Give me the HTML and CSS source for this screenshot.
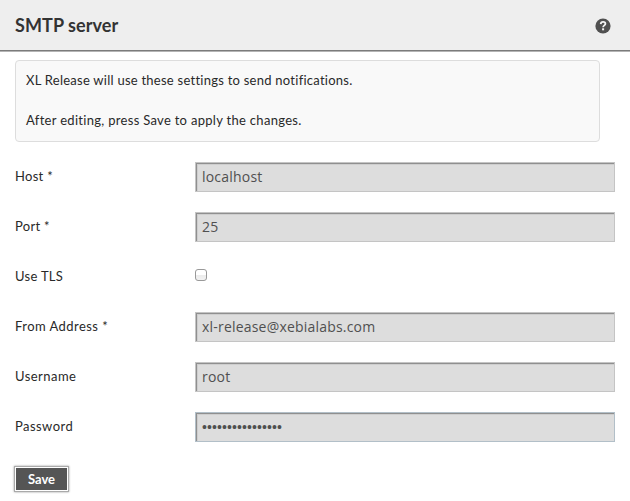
FILE: index.html
```html
<!DOCTYPE html>
<html lang="en">
<head>
<meta charset="utf-8">
<title>SMTP server</title>
<link rel="stylesheet" href="styles.css">
</head>
<body>
<header class="header">
  <h1 class="title">SMTP server</h1>
  <svg class="help" viewBox="0 0 16 16" role="img" aria-label="Help">
    <circle cx="8" cy="8" r="7.6" fill="#505050"/>
    <path d="M5.7 6.1C5.8 4.7 6.7 3.9 8.1 3.9C9.5 3.9 10.4 4.7 10.4 5.8C10.4 7.4 8.2 7.4 8.1 9.2" fill="none" stroke="#f4f4f4" stroke-width="1.8"/>
    <rect x="7.1" y="10.3" width="2" height="2" fill="#f4f4f4"/>
  </svg>
</header>
<main class="content">
  <div class="info">
    <p class="info-line info-intro">XL Release will use these settings to send notifications.</p>
    <p class="info-line">After editing, press Save to apply the changes.</p>
  </div>
  <form class="form">
    <div class="row"><label class="label" for="host">Host *</label><input class="field" id="host" type="text" value="localhost"></div>
    <div class="row"><label class="label" for="port">Port *</label><input class="field" id="port" type="text" value="25"></div>
    <div class="row"><label class="label" for="tls">Use TLS</label><input class="check" id="tls" type="checkbox"></div>
    <div class="row"><label class="label label-wide" for="from">From Address *</label><input class="field" id="from" type="text" value="xl-release@xebialabs.com"></div>
    <div class="row"><label class="label label-wide" for="user">Username</label><input class="field" id="user" type="text" value="root"></div>
    <div class="row"><label class="label label-wide" for="pass">Password</label><input class="field field-password" id="pass" type="password" value="abcdefghijklmnop"></div>
    <button class="save" type="button">Save</button>
  </form>
</main>
</body>
</html>
```
FILE: styles.css
```css
* { box-sizing: border-box; }
body {
  margin: 0;
  min-height: 501px;
  background: #fff;
  color: #292929;
  font: 13px/20px Lato, "Open Sans", sans-serif;
  letter-spacing: 0.3px;
}
.header {
  display: flex;
  align-items: center;
  justify-content: space-between;
  height: 52px;
  padding: 0 19px 0 15px;
  background: #eee;
  border-bottom: 1px solid #b4b4b4;
  box-shadow: inset 0 -1px #7b7b7b;
}
.title {
  margin: 0 0 2px;
  font-size: 18px;
  line-height: 24px;
  font-weight: 700;
  letter-spacing: 0.08px;
  color: #333;
}
.help { width: 16px; height: 16px; }
.content { padding: 8px 15px 0; }
.info {
  width: 585px;
  height: 82px;
  padding: 9px 10px;
  border: 1px solid #ddd;
  border-radius: 4px;
  background: #f9f9f9;
}
.info-line { margin: 0 0 20px; }
.info-intro { letter-spacing: 0.25px; }
.form { padding-top: 10px; }
.row { display: flex; align-items: center; height: 50px; }
.label { width: 180px; padding-bottom: 2px; }
.label-wide { letter-spacing: 0.45px; }
.field {
  width: 420px;
  height: 30px;
  margin: 0;
  padding: 0 5px 1px 6px;
  border: 1px solid #c4c4c4;
  border-radius: 0;
  outline: 0;
  background: #ddd;
  box-shadow: inset 1px 1px #8f8f8f, inset 2px 2px #cecece;
  color: #505050;
  font: 14px "Open Sans", sans-serif;
  letter-spacing: 0.2px;
}
.field-password {
  border-color: #b2bfc8;
  font-family: "Liberation Sans", sans-serif;
  letter-spacing: 0.1px;
}
.check {
  appearance: none;
  width: 12px;
  height: 12px;
  margin: 0 0 4px;
  border: 1px solid #999;
  border-radius: 3px;
  background: linear-gradient(#fff, #fff 45%, #ececec 50%, #f2f2f2);
}
.save {
  display: block;
  width: 53px;
  height: 24px;
  margin: 15px 0 0;
  padding: 0;
  border: 1px solid #fff;
  border-radius: 0;
  background: #555;
  box-shadow: 0 0 0 1px #aaa, 0 0 2px 1px #999;
  color: #fff;
  font: 700 13px/20px Lato, sans-serif;
}
```
